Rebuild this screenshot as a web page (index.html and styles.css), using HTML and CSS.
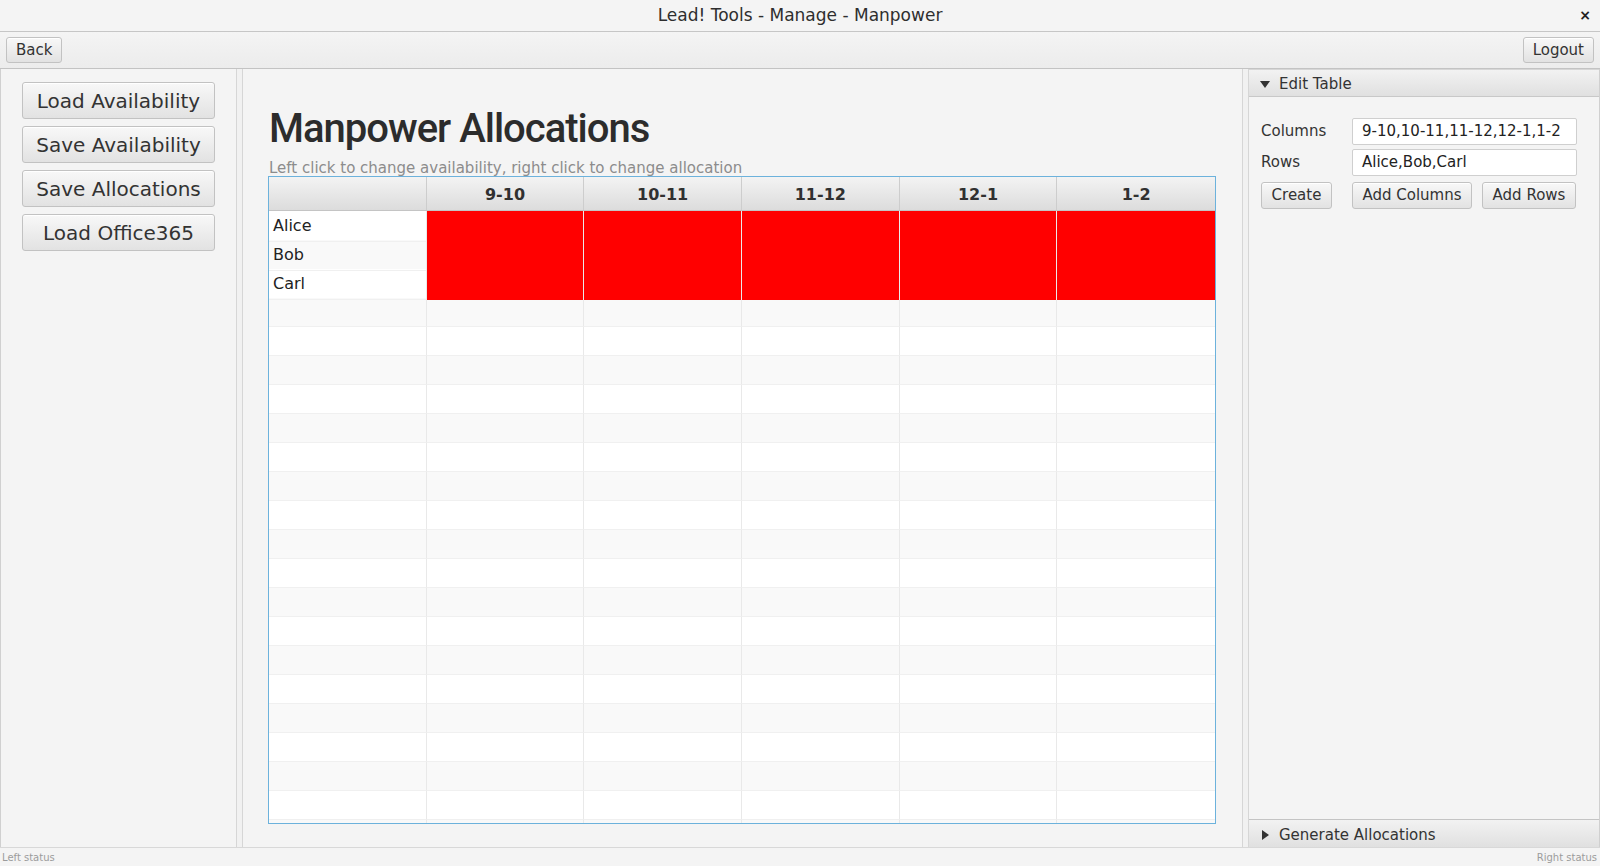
FILE: index.html
```html
<!DOCTYPE html>
<html>
<head>
<meta charset="utf-8">
<link rel="stylesheet" href="styles.css">
</head>
<body>
<div class="app">
  <div class="titlebar">
    <span class="title">Lead! Tools - Manage - Manpower</span>
    <span class="close">×</span>
  </div>
  <div class="toolbar">
    <button class="btn btn-small">Back</button>
    <button class="btn btn-small">Logout</button>
  </div>
  <div class="main">
    <div class="left">
      <button class="btn btn-big">Load Availability</button>
      <button class="btn btn-big">Save Availability</button>
      <button class="btn btn-big">Save Allocations</button>
      <button class="btn btn-big">Load Office365</button>
    </div>
    <div class="divider"></div>
    <div class="center">
      <h1 class="heading">Manpower Allocations</h1>
      <div class="hint">Left click to change availability, right click to change allocation</div>
      <div class="table">
        <div class="thead">
          <div class="th"></div>
          <div class="th">9-10</div>
          <div class="th">10-11</div>
          <div class="th">11-12</div>
          <div class="th">12-1</div>
          <div class="th">1-2</div>
        </div>
        <div class="tbody" id="tbody">
          <div class="tr odd"><div class="td name">Alice</div><div class="td red"></div><div class="td red"></div><div class="td red"></div><div class="td red"></div><div class="td red"></div></div>
          <div class="tr even"><div class="td name">Bob</div><div class="td red"></div><div class="td red"></div><div class="td red"></div><div class="td red"></div><div class="td red"></div></div>
          <div class="tr odd"><div class="td name">Carl</div><div class="td red"></div><div class="td red"></div><div class="td red"></div><div class="td red"></div><div class="td red"></div></div>
          <div class="tr even"><div class="td"></div><div class="td"></div><div class="td"></div><div class="td"></div><div class="td"></div><div class="td"></div></div>
          <div class="tr odd"><div class="td"></div><div class="td"></div><div class="td"></div><div class="td"></div><div class="td"></div><div class="td"></div></div>
          <div class="tr even"><div class="td"></div><div class="td"></div><div class="td"></div><div class="td"></div><div class="td"></div><div class="td"></div></div>
          <div class="tr odd"><div class="td"></div><div class="td"></div><div class="td"></div><div class="td"></div><div class="td"></div><div class="td"></div></div>
          <div class="tr even"><div class="td"></div><div class="td"></div><div class="td"></div><div class="td"></div><div class="td"></div><div class="td"></div></div>
          <div class="tr odd"><div class="td"></div><div class="td"></div><div class="td"></div><div class="td"></div><div class="td"></div><div class="td"></div></div>
          <div class="tr even"><div class="td"></div><div class="td"></div><div class="td"></div><div class="td"></div><div class="td"></div><div class="td"></div></div>
          <div class="tr odd"><div class="td"></div><div class="td"></div><div class="td"></div><div class="td"></div><div class="td"></div><div class="td"></div></div>
          <div class="tr even"><div class="td"></div><div class="td"></div><div class="td"></div><div class="td"></div><div class="td"></div><div class="td"></div></div>
          <div class="tr odd"><div class="td"></div><div class="td"></div><div class="td"></div><div class="td"></div><div class="td"></div><div class="td"></div></div>
          <div class="tr even"><div class="td"></div><div class="td"></div><div class="td"></div><div class="td"></div><div class="td"></div><div class="td"></div></div>
          <div class="tr odd"><div class="td"></div><div class="td"></div><div class="td"></div><div class="td"></div><div class="td"></div><div class="td"></div></div>
          <div class="tr even"><div class="td"></div><div class="td"></div><div class="td"></div><div class="td"></div><div class="td"></div><div class="td"></div></div>
          <div class="tr odd"><div class="td"></div><div class="td"></div><div class="td"></div><div class="td"></div><div class="td"></div><div class="td"></div></div>
          <div class="tr even"><div class="td"></div><div class="td"></div><div class="td"></div><div class="td"></div><div class="td"></div><div class="td"></div></div>
          <div class="tr odd"><div class="td"></div><div class="td"></div><div class="td"></div><div class="td"></div><div class="td"></div><div class="td"></div></div>
          <div class="tr even"><div class="td"></div><div class="td"></div><div class="td"></div><div class="td"></div><div class="td"></div><div class="td"></div></div>
          <div class="tr odd"><div class="td"></div><div class="td"></div><div class="td"></div><div class="td"></div><div class="td"></div><div class="td"></div></div>
          <div class="tr even"><div class="td"></div><div class="td"></div><div class="td"></div><div class="td"></div><div class="td"></div><div class="td"></div></div>
        </div>
      </div>
    </div>
    <div class="divider"></div>
    <div class="right">
      <div class="pane-header">
        <svg class="arrow" width="10" height="10" viewBox="0 0 10 10"><path d="M0 2 L10 2 L5 9 Z" fill="#333"/></svg>
        <span>Edit Table</span>
      </div>
      <div class="pane-body">
        <div class="form">
          <label class="lbl">Columns</label>
          <div class="field">9-10,10-11,11-12,12-1,1-2</div>
          <label class="lbl">Rows</label>
          <div class="field">Alice,Bob,Carl</div>
          <button class="btn btn-form btn-create">Create</button>
          <div class="form-btns">
            <button class="btn btn-form btn-addcol">Add Columns</button>
            <button class="btn btn-form btn-addrow">Add Rows</button>
          </div>
        </div>
      </div>
      <div class="pane-header pane-header-bottom">
        <svg class="arrow" width="10" height="10" viewBox="0 0 10 10"><path d="M2 0 L9 5 L2 10 Z" fill="#333"/></svg>
        <span>Generate Allocations</span>
      </div>
    </div>
  </div>
  <div class="statusbar">
    <span>Left status</span>
    <span>Right status</span>
  </div>
</div>
</body>
</html>
```
FILE: styles.css
```css
html, body {
  margin: 0;
  padding: 0;
}
body {
  background: #f4f4f4;
  font-family: "DejaVu Sans", sans-serif;
  color: #333;
  width: 1600px;
  height: 866px;
  overflow: hidden;
}
.app {
  display: flex;
  flex-direction: column;
  height: 866px;
}
.titlebar {
  height: 31px;
  border-bottom: 1px solid #c6c6c6;
  background: #f4f4f4;
  display: flex;
  align-items: center;
  justify-content: center;
  position: relative;
  box-sizing: content-box;
}
.title {
  font-size: 17px;
  color: #2e2e2e;
}
.close {
  position: absolute;
  right: 9px;
  top: 7px;
  font-size: 14px;
  font-weight: bold;
  color: #222;
}
.toolbar {
  box-sizing: border-box;
  padding: 5px 6px;
  display: flex;
  justify-content: space-between;
  align-items: flex-start;
  border-bottom: 1px solid #c3c3c3;
  background: linear-gradient(#f4f4f4, #ececec);
  height: 37px;
}
.btn {
  font-family: "DejaVu Sans", sans-serif;
  color: #333;
  background: linear-gradient(#f8f8f8, #e2e2e2);
  border: 1px solid #c2c2c2;
  border-radius: 3px;
  box-shadow: inset 0 1px 0 #fff;
  padding: 0;
  margin: 0;
  box-sizing: border-box;
}
.btn-small {
  height: 26px;
  font-size: 15px;
  padding: 0 9px;
}
.main {
  display: flex;
  height: 779px;
}
.left {
  width: 236px;
  box-sizing: border-box;
  border-left: 1px solid #d0d0d0;
  padding: 13px 0 0 21px;
  display: flex;
  flex-direction: column;
  gap: 7px;
  background: #f4f4f4;
}
.btn-big {
  width: 193px;
  height: 37px;
  font-size: 20px;
  padding-top: 2px;
}
.divider {
  width: 7px;
  box-sizing: border-box;
  border-left: 1px solid #d6d6d6;
  border-right: 1px solid #d6d6d6;
  background: #f1f1f1;
}
.center {
  flex: 1;
  padding: 0 26px 0 25px;
  display: flex;
  flex-direction: column;
}
.heading {
  margin: 36px 0 0 1px;
  font-family: Roboto, sans-serif;
  font-weight: 500;
  font-size: 40px;
  letter-spacing: -1px;
  line-height: 48px;
  color: #2c2c2c;
}
.hint {
  font-size: 15px;
  color: #8c8c8c;
  line-height: 16px;
  margin-top: 7px;
  margin-left: 1px;
}
.table {
  width: 948px;
  height: 648px;
  box-sizing: border-box;
  border: 1px solid #6cb2dc;
  background: #fff;
  overflow: hidden;
}
.thead {
  display: grid;
  grid-template-columns: repeat(6, 1fr);
  height: 33px;
  background: linear-gradient(#f3f3f3, #dcdcdc);
  border-bottom: 1px solid #c4c4c4;
}
.th {
  border-right: 1px solid #cdcdcd;
  font-weight: bold;
  font-size: 16px;
  display: flex;
  align-items: center;
  justify-content: center;
  color: #303030;
  padding-top: 2px;
}
.th:last-child { border-right: none; }
.tr {
  display: grid;
  grid-template-columns: repeat(6, 1fr);
  height: 29px;
}
.tr.odd { background: #fff; }
.tr.even { background: #f9f9f9; }
.td {
  border-right: 1px solid #e9e9e9;
  border-bottom: 1px solid #f0f0f0;
  box-sizing: border-box;
}
.td:last-child { border-right: none; }
.td.name {
  font-size: 16px;
  line-height: 30px;
  padding-left: 4px;
  color: #222;
}
.td.red {
  background: #ff0000;
  border-bottom: none;
  border-right: 1px solid #eaeaea;
}
.td.red:last-child { border-right: none; }
.right {
  width: 351px;
  box-sizing: border-box;
  border-right: 1px solid #d0d0d0;
  display: flex;
  flex-direction: column;
}
.pane-header {
  height: 28px;
  box-sizing: border-box;
  background: linear-gradient(#f2f2f2, #e0e0e0);
  border-bottom: 1px solid #c8c8c8;
  border-top: 1px solid #d6d6d6;
  display: flex;
  align-items: center;
  padding-left: 11px;
  padding-top: 2px;
  font-size: 15px;
  color: #333;
  gap: 9px;
}
.pane-header-bottom {
  border-top: 1px solid #c4c4c4;
  border-bottom: none;
}
.pane-body {
  flex: 1;
  background: #f4f4f4;
  padding: 21px 22px 0 12px;
}
.form {
  display: grid;
  grid-template-columns: 91px 1fr;
  grid-template-rows: 27px 27px 27px;
  row-gap: 4px;
}
.lbl {
  font-size: 15px;
  align-self: center;
  color: #333;
  margin-top: -1px;
}
.field {
  background: #fff;
  border: 1px solid #cfcfcf;
  border-radius: 2px;
  font-size: 15px;
  line-height: 25px;
  padding-left: 9px;
  color: #222;
}
.btn-form {
  height: 27px;
  font-size: 15px;
  margin-top: 2px;
}
.btn-create { width: 71px; }
.form-btns {
  display: flex;
  gap: 10px;
}
.btn-addcol { width: 120px; }
.btn-addrow { width: 94px; }
.statusbar {
  height: 18px;
  display: flex;
  justify-content: space-between;
  align-items: center;
  padding: 0 3px 0 2px;
  font-size: 10px;
  color: #9c9c9c;
  border-top: 1px solid #d8d8d8;
}
```
